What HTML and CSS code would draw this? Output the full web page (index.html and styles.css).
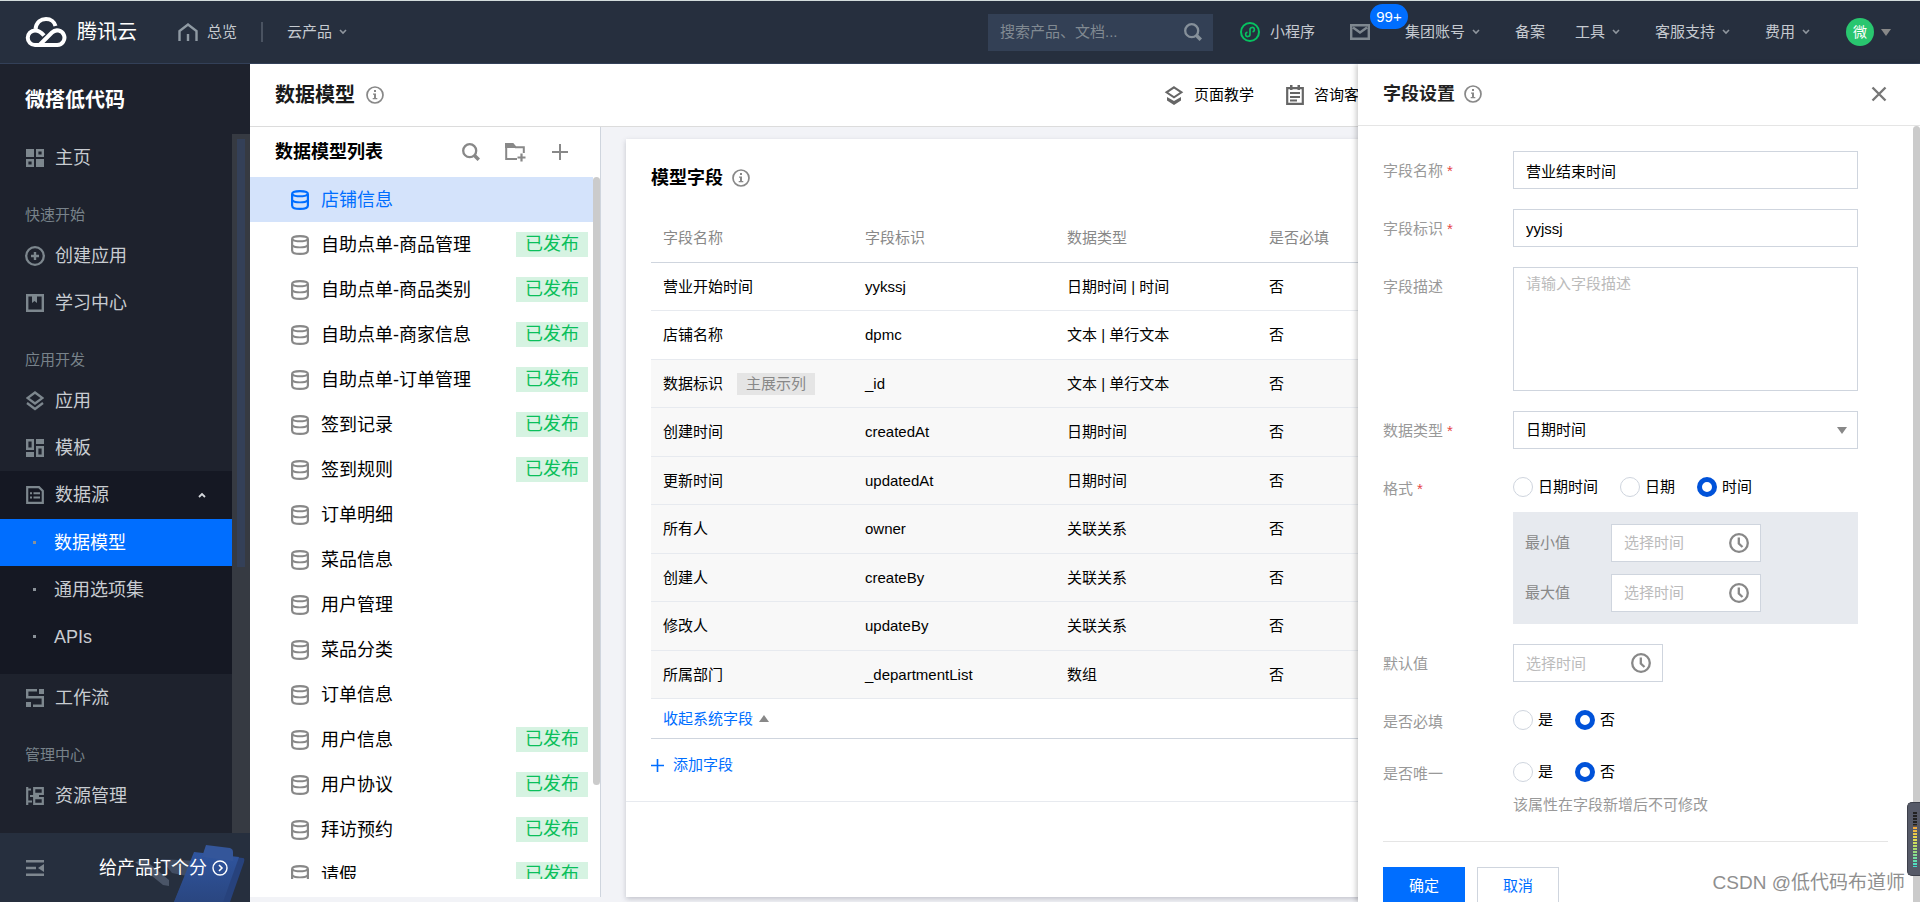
FILE: index.html
```html
<!DOCTYPE html>
<html lang="zh-CN">
<head>
<meta charset="utf-8">
<title>数据模型 - 微搭低代码</title>
<link rel="stylesheet" href="styles.css">
</head>
<body>
<svg class="sprite" aria-hidden="true">
  <symbol id="i-info" viewBox="0 0 18 18"><circle cx="9" cy="9" r="8" fill="none" stroke="currentColor" stroke-width="1.7"/><path d="M8 4h2v2H8zM7 7.500h3V12h1.300v1.200H6.700V12H8V8.700H7z" fill="currentColor"/></symbol>
  <symbol id="i-db" viewBox="0 0 18 20"><g fill="none" stroke="currentColor" stroke-width="2.200"><path d="M1.100 4C1.100 2 4 1.100 9 1.100S16.900 2 16.900 4v11.500c0 2.600-2.900 3.400-7.900 3.400s-7.900-.8-7.900-3.400z"/><path d="M1.500 4.500C3 6 5.500 6.300 9 6.300s6-.3 7.500-1.800M1.500 10.500C3 12 5.500 12.400 9 12.400s6-.4 7.500-1.900" stroke-width="1.900"/></g></symbol>
  <symbol id="i-search" viewBox="0 0 18 18"><circle cx="7.700" cy="7.700" r="6.500" fill="none" stroke="currentColor" stroke-width="2.300"/><path d="M12.500 12.500l4.300 4.300" stroke="currentColor" stroke-width="3.500"/></symbol>
  <symbol id="i-chev" viewBox="0 0 8 6"><path d="M1 1l3 3 3-3" fill="none" stroke="currentColor" stroke-width="1.600"/></symbol>
  <symbol id="i-clock" viewBox="0 0 20 20"><circle cx="10" cy="10" r="8.800" fill="none" stroke="currentColor" stroke-width="2.300"/><path d="M9.800 4.500v6l3.700 3.500" fill="none" stroke="currentColor" stroke-width="2.300"/></symbol>
  <symbol id="i-plus" viewBox="0 0 16 16"><path d="M8 0v16M0 8h16" stroke="currentColor" stroke-width="2"/></symbol>
  <symbol id="i-layers" viewBox="0 0 18 20"><path d="M9 1.500l7.500 5.500L9 12.500 1.500 7zM1 12l8 6 8-6" fill="none" stroke="currentColor" stroke-width="2.300"/></symbol>
</svg>

<header class="topbar">
  <a class="brand" href="#" aria-label="腾讯云">
    <svg width="42" height="30" viewBox="0 0 42 30"><g fill="none" stroke="#fff" stroke-width="4"><path d="M10.500 12C11.500 5 16 2 21 2c5 0 8.500 3 9.500 7"/><path d="M19 18.500C16.500 15.500 13.500 13.500 10 13.500a7.200 7.200 0 0 0 0 14.500H32a7.300 7.300 0 1 0-5-12.500L14.500 28"/></g></svg>
    <span>腾讯云</span>
  </a>
  <a class="top-home" href="#"><svg width="20" height="19" viewBox="0 0 20 19"><path d="M1.500 18V8L10 1.500 18.500 8v10M10 11v7" fill="none" stroke="#8f9aa3" stroke-width="2.400"/></svg>总览</a>
  <span class="top-sep"></span>
  <a class="top-link top-products" href="#">云产品<svg class="chev"><use href="#i-chev"/></svg></a>
  <div class="top-right">
    <label class="top-search"><input type="text" placeholder="搜索产品、文档..." aria-label="搜索"><svg width="18" height="18"><use href="#i-search"/></svg></label>
    <a class="top-link mini" href="#"><svg width="20" height="20" viewBox="0 0 20 20"><g fill="none" stroke="#07c160" stroke-width="2"><circle cx="10" cy="10" r="9"/><path d="M7.500 10.200a2.200 2.200 0 1 0 2.500 2.100V7.700a2.200 2.200 0 1 1 2.500 2.100" stroke-width="1.600"/></g></svg>小程序</a>
    <a class="mail" href="#" aria-label="消息"><svg width="20" height="16" viewBox="0 0 20 16"><path d="M1.200 1.200h17.600v13.600H1.200zM3 3.500l7 5 7-5" fill="none" stroke="#7e878f" stroke-width="2.400"/></svg><span class="badge">99+</span></a>
    <a class="top-link t-group" href="#">集团账号<svg class="chev"><use href="#i-chev"/></svg></a>
    <a class="top-link t-icp" href="#">备案</a>
    <a class="top-link t-tool" href="#">工具<svg class="chev"><use href="#i-chev"/></svg></a>
    <a class="top-link t-help" href="#">客服支持<svg class="chev"><use href="#i-chev"/></svg></a>
    <a class="top-link t-cost" href="#">费用<svg class="chev"><use href="#i-chev"/></svg></a>
    <button class="user" type="button"><span class="avatar">微</span><span class="tri-down"></span></button>
  </div>
</header>

<div class="body">
  <aside class="sidebar">
    <h1 class="side-title">微搭低代码</h1>
    <div class="side-scroll">
      <nav class="side-nav">
        <a class="nav-item" href="#"><svg width="18" height="18"><path d="M0 0h8v8H0zM10 10h8v8h-8z" fill="currentColor"/><path d="M11.200 1.200h5.600v5.600h-5.600zM1.200 11.200h5.600v5.600H1.200z" fill="none" stroke="currentColor" stroke-width="2.400"/></svg>主页</a>
        <div class="nav-label">快速开始</div>
        <a class="nav-item" href="#"><svg width="20" height="20" viewBox="0 0 20 20"><circle cx="10" cy="10" r="8.800" fill="none" stroke="currentColor" stroke-width="2.300"/><path d="M10 6v8M6 10h8" stroke="currentColor" stroke-width="2.400"/></svg>创建应用</a>
        <a class="nav-item" href="#"><svg width="18" height="18"><path d="M1.200 1.200h15.600v15.600H1.200z" fill="none" stroke="currentColor" stroke-width="2.400"/><path d="M6 2h5v7L8.500 7 6 9z" fill="currentColor"/></svg>学习中心</a>
        <div class="nav-label">应用开发</div>
        <a class="nav-item" href="#"><svg width="18" height="20"><use href="#i-layers"/></svg>应用</a>
        <a class="nav-item" href="#"><svg width="18" height="18"><path d="M10 0h8v5h-8zM0 13h8v5H0z" fill="currentColor"/><path d="M1.200 1.200h5.600v8.600H1.200zM11.200 8.200h5.600v8.600h-5.600z" fill="none" stroke="currentColor" stroke-width="2.400"/></svg>模板</a>
        <div class="nav-group">
          <a class="nav-item nav-parent" href="#"><svg width="18" height="18"><path d="M1.200 1.200H13l3.800 3.800v11.800H1.200z" fill="none" stroke="currentColor" stroke-width="2.200"/><path d="M4 6.200h2v2H4zM7.500 6.200H14v2H7.500zM4 10.500h2v2H4zM7.500 10.500H14v2H7.500z" fill="currentColor"/></svg>数据源<svg class="nav-arrow" width="8" height="6"><path d="M1 5l3-3 3 3" fill="none" stroke="#d5d8dc" stroke-width="1.800"/></svg></a>
          <a class="nav-sub active" href="#">数据模型</a>
          <a class="nav-sub" href="#">通用选项集</a>
          <a class="nav-sub" href="#">APIs</a>
        </div>
        <a class="nav-item" href="#"><svg width="18" height="18"><path d="M13 0h5v5h-5zM0 13h5v5H0z" fill="currentColor"/><path d="M11 1.200H1.200v7H16.800v8.600H7" fill="none" stroke="currentColor" stroke-width="2.400"/></svg>工作流</a>
        <div class="nav-label">管理中心</div>
        <a class="nav-item" href="#"><svg width="18" height="18"><path d="M1.200 0v18M1 2.500h4M1 14.500h5M8.200 1.200h8.600v5.600H8.200zM8.200 11.200h8.600v5.600H8.200zM4 9h9" fill="none" stroke="currentColor" stroke-width="2.200"/></svg>资源管理</a>
        <a class="nav-item" href="#" aria-label="更多"><svg width="20" height="20"><path d="M1 1h18v18H1z" fill="none" stroke="currentColor" stroke-width="2"/></svg></a>
      </nav>
      <div class="side-track"><div class="side-thumb"></div></div>
    </div>
    <div class="side-foot">
      <button class="fold" type="button" aria-label="收起菜单"><svg width="18" height="16" viewBox="0 0 18 16"><path d="M0 1.200h18M0 8h10M0 14.800h18" stroke="#7e878f" stroke-width="2.400"/><path d="M18 4v8l-6-4z" fill="#7e878f"/></svg></button>
      <a class="rate" href="#"><span>给产品打个分</span><svg width="16" height="16" viewBox="0 0 16 16"><circle cx="8" cy="8" r="7" fill="none" stroke="#fff" stroke-width="1.400"/><path d="M7 5l3 3-3 3" fill="none" stroke="#fff" stroke-width="1.600"/></svg></a>
      <svg class="rate-art" width="120" height="58" viewBox="0 0 120 58"><defs><linearGradient id="ga" x1="0" y1="0" x2="0" y2="1"><stop offset="0" stop-color="#2f559f"/><stop offset="1" stop-color="#2a4680"/></linearGradient></defs><path d="M10 18l10-2 24 20v6l-6-1z" fill="#4a5567"/><path d="M36 15l35 2-4 16-20-4z" fill="#414d63"/><path d="M70 9l48 5q2 0 1 4l-14 40H49z" fill="#27427c"/><path d="M69 8l45 5-16 45H49z" fill="url(#ga)"/><path d="M81 1l24 3q3 1 3 4v9l-31-4z" fill="#34569a"/></svg>
    </div>
  </aside>

  <main class="main">
    <div class="page-head">
      <h2>数据模型</h2><svg class="info" width="18" height="18"><use href="#i-info"/></svg>
      <div class="page-links">
        <a href="#"><svg width="20" height="19" viewBox="0 0 20 19"><path d="M10 1.300l7.500 5L10 11.300l-7.500-5z" fill="none" stroke="#666" stroke-width="2"/><path d="M3 11l7 4 7-4v3.500L10 19l-7-4.500z" fill="#666"/></svg>页面教学</a>
        <a href="#"><svg width="18" height="20" viewBox="0 0 18 20"><path d="M1.200 3.200h15.600v15.600H1.200zM4 8h10M4 12h10M4 15.500h7" fill="none" stroke="#666" stroke-width="2.200"/><path d="M4 0h2.500v5H4zM11.500 0H14v5h-2.500z" fill="#666"/></svg>咨询客服</a>
      </div>
    </div>
    <div class="content">
      <section class="models">
        <div class="models-head">
          <h3>数据模型列表</h3>
          <button type="button" aria-label="搜索"><svg width="18" height="18"><use href="#i-search"/></svg></button>
          <button type="button" aria-label="新建分组"><svg width="22" height="19" viewBox="0 0 22 19"><path d="M12 16H1.200V1.200H8l2.500 3h8.300V10" fill="none" stroke="currentColor" stroke-width="2"/><path d="M0 0h8l3 5H0z" fill="currentColor"/><path d="M16.500 10.500v8M12.500 14.500h8" stroke="currentColor" stroke-width="2.200"/></svg></button>
          <button type="button" aria-label="新建"><svg width="16" height="16"><use href="#i-plus"/></svg></button>
        </div>
        <div class="models-scroll">
          <ul class="model-list">
            <li class="active"><svg><use href="#i-db"/></svg><a href="#">店铺信息</a></li>
            <li><svg><use href="#i-db"/></svg><a href="#">自助点单-商品管理</a><span class="tag">已发布</span></li>
            <li><svg><use href="#i-db"/></svg><a href="#">自助点单-商品类别</a><span class="tag">已发布</span></li>
            <li><svg><use href="#i-db"/></svg><a href="#">自助点单-商家信息</a><span class="tag">已发布</span></li>
            <li><svg><use href="#i-db"/></svg><a href="#">自助点单-订单管理</a><span class="tag">已发布</span></li>
            <li><svg><use href="#i-db"/></svg><a href="#">签到记录</a><span class="tag">已发布</span></li>
            <li><svg><use href="#i-db"/></svg><a href="#">签到规则</a><span class="tag">已发布</span></li>
            <li><svg><use href="#i-db"/></svg><a href="#">订单明细</a></li>
            <li><svg><use href="#i-db"/></svg><a href="#">菜品信息</a></li>
            <li><svg><use href="#i-db"/></svg><a href="#">用户管理</a></li>
            <li><svg><use href="#i-db"/></svg><a href="#">菜品分类</a></li>
            <li><svg><use href="#i-db"/></svg><a href="#">订单信息</a></li>
            <li><svg><use href="#i-db"/></svg><a href="#">用户信息</a><span class="tag">已发布</span></li>
            <li><svg><use href="#i-db"/></svg><a href="#">用户协议</a><span class="tag">已发布</span></li>
            <li><svg><use href="#i-db"/></svg><a href="#">拜访预约</a><span class="tag">已发布</span></li>
            <li><svg><use href="#i-db"/></svg><a href="#">请假</a><span class="tag">已发布</span></li>
          </ul>
          <div class="list-track"><div class="list-thumb"></div></div>
        </div>
      </section>

      <section class="card">
        <div class="fields">
          <div class="card-title"><h3>模型字段</h3><svg class="info" width="18" height="18"><use href="#i-info"/></svg></div>
          <table>
            <thead><tr><th>字段名称</th><th>字段标识</th><th>数据类型</th><th>是否必填</th><th class="rest"></th></tr></thead>
            <tbody>
              <tr><td>营业开始时间</td><td>yykssj</td><td>日期时间 | 时间</td><td>否</td><td></td></tr>
              <tr><td>店铺名称</td><td>dpmc</td><td>文本 | 单行文本</td><td>否</td><td></td></tr>
              <tr class="sys"><td>数据标识<span class="main-col">主展示列</span></td><td>_id</td><td>文本 | 单行文本</td><td>否</td><td></td></tr>
              <tr class="sys"><td>创建时间</td><td>createdAt</td><td>日期时间</td><td>否</td><td></td></tr>
              <tr class="sys"><td>更新时间</td><td>updatedAt</td><td>日期时间</td><td>否</td><td></td></tr>
              <tr class="sys"><td>所有人</td><td>owner</td><td>关联关系</td><td>否</td><td></td></tr>
              <tr class="sys"><td>创建人</td><td>createBy</td><td>关联关系</td><td>否</td><td></td></tr>
              <tr class="sys"><td>修改人</td><td>updateBy</td><td>关联关系</td><td>否</td><td></td></tr>
              <tr class="sys"><td>所属部门</td><td>_departmentList</td><td>数组</td><td>否</td><td></td></tr>
            </tbody>
          </table>
          <div class="collapse"><a href="#">收起系统字段</a><span class="tri-up"></span></div>
          <a class="add" href="#"><svg width="13" height="13"><use href="#i-plus"/></svg>添加字段</a>
        </div>
      </section>
    </div>
  </main>
</div>

<aside class="drawer">
  <div class="drawer-head">
    <h3>字段设置</h3><svg class="info" width="18" height="18"><use href="#i-info"/></svg>
    <button class="close" type="button" aria-label="关闭"><svg width="16" height="16" viewBox="0 0 16 16"><path d="M1.500 1.500l13 13M14.500 1.500l-13 13" stroke="#777" stroke-width="2.400"/></svg></button>
  </div>
  <div class="drawer-scroll">
    <form class="form">
      <div class="row"><label class="lab req" for="f-name">字段名称</label><input class="box" id="f-name" type="text" value="营业结束时间"></div>
      <div class="row"><label class="lab req" for="f-id">字段标识</label><input class="box" id="f-id" type="text" value="yyjssj"></div>
      <div class="row"><label class="lab" for="f-desc">字段描述</label><textarea class="box area" id="f-desc" placeholder="请输入字段描述"></textarea></div>
      <div class="row"><label class="lab req" for="f-type">数据类型</label><div class="select"><select class="box" id="f-type"><option>日期时间</option></select><span class="tri-down"></span></div></div>
      <div class="row"><span class="lab req" id="l-fmt">格式</span>
        <div>
          <div class="radios" role="radiogroup" aria-labelledby="l-fmt"><label><input type="radio" name="fmt">日期时间</label><label><input type="radio" name="fmt">日期</label><label><input type="radio" name="fmt" checked>时间</label></div>
          <div class="range">
            <label for="f-min">最小值</label><div class="time"><input class="box" id="f-min" type="text" placeholder="选择时间"><svg><use href="#i-clock"/></svg></div>
            <label for="f-max">最大值</label><div class="time"><input class="box" id="f-max" type="text" placeholder="选择时间"><svg><use href="#i-clock"/></svg></div>
          </div>
        </div>
      </div>
      <div class="row"><label class="lab" for="f-def">默认值</label><div class="time"><input class="box" id="f-def" type="text" placeholder="选择时间"><svg><use href="#i-clock"/></svg></div></div>
      <div class="row"><span class="lab" id="l-must">是否必填</span><div class="radios" role="radiogroup" aria-labelledby="l-must"><label><input type="radio" name="must">是</label><label><input type="radio" name="must" checked>否</label></div></div>
      <div class="row"><span class="lab" id="l-uniq">是否唯一</span><div><div class="radios" role="radiogroup" aria-labelledby="l-uniq"><label><input type="radio" name="uniq">是</label><label><input type="radio" name="uniq" checked>否</label></div><p class="hint">该属性在字段新增后不可修改</p></div></div>
      <div class="actions"><button class="ok" type="button">确定</button><button class="cancel" type="button">取消</button></div>
    </form>
    <div class="drawer-thumb"></div>
  </div>
</aside>
<div class="meter"><div class="meter-bars"></div></div>
<div class="watermark">CSDN @低代码布道师</div>
</body>
</html>
```
FILE: styles.css
```css
* { box-sizing: border-box; }
body {
  margin: 0;
  height: 100vh;
  overflow: hidden;
  display: flex;
  flex-direction: column;
  background: #f2f3f7;
  color: #000;
  font: 15px/22px "Liberation Sans", "Noto Sans CJK SC", sans-serif;
}
a { color: inherit; text-decoration: none; }
button { border: 0; padding: 0; background: none; font: inherit; color: inherit; display: flex; align-items: center; }
input, select, textarea { font: inherit; color: inherit; }
h1, h2, h3, p, ul { margin: 0; padding: 0; }
svg { display: block; flex: none; }
.sprite { position: absolute; width: 0; height: 0; }
.info { color: #888; }

/* Top bar */
.topbar {
  flex: none;
  height: 64px;
  display: flex;
  align-items: center;
  padding-left: 25px;
  background: #262f3e;
  border-top: 1px solid #d3dcdc;
  border-bottom: 1px solid #334058;
  color: #c5cad0;
}
.brand { display: flex; align-items: center; gap: 10px; width: 153px; color: #fff; font-size: 20px; line-height: 30px; }
.top-home { display: flex; align-items: center; gap: 9px; width: 83px; }
.top-sep { width: 2px; height: 20px; background: #4a5361; }
.top-link { display: flex; align-items: center; }
.top-products { margin-left: 24px; }
.chev { width: 8px; height: 6px; margin-left: 7px; color: #8f969e; }
.top-right { margin-left: auto; display: flex; align-items: center; padding-right: 29px; }
.top-search { display: flex; align-items: center; width: 225px; height: 37px; padding: 0 11px 0 12px; background: #334055; color: #86909a; }
.top-search input { flex: 1; min-width: 0; border: 0; padding: 0; background: none; outline: 0; }
.top-search input::placeholder { color: #818a92; }
.mini { gap: 10px; margin-left: 27px; width: 110px; }
.mail { position: relative; width: 20px; }
.badge {
  position: absolute;
  left: 20px;
  top: -20px;
  width: 38px;
  height: 25px;
  border-radius: 13px;
  background: #006eff;
  color: #fff;
  text-align: center;
  line-height: 25px;
}
.t-group { margin-left: 35px; width: 110px; }
.t-icp { width: 60px; }
.t-tool { width: 80px; }
.t-help { width: 110px; }
.t-cost { width: 81px; }
.user { gap: 7px; }
.avatar { width: 28px; height: 28px; border-radius: 50%; background: #29c66f; color: #fff; font-size: 14px; line-height: 28px; text-align: center; }
.tri-down { border: 5px solid transparent; border-top: 7px solid #888; border-bottom: 0; }
.tri-up { border: 5px solid transparent; border-bottom: 7px solid #888; border-top: 0; }

.body { flex: 1; min-height: 0; display: flex; }

/* Sidebar */
.sidebar { flex: none; width: 250px; display: flex; flex-direction: column; background: #1e222d; color: #c8ccd1; }
.side-title { height: 70px; padding-left: 25px; font-size: 20px; line-height: 72px; color: #fff; }
.side-scroll { flex: 1; min-height: 0; display: flex; overflow: hidden; }
.side-nav { flex: 1; font-size: 18px; }
.nav-item { display: flex; align-items: center; height: 47px; padding-left: 26px; }
.nav-item > svg:first-child { color: #7d878e; margin-right: 11px; }
.nav-item > svg[width="20"] { margin-left: -1px; margin-right: 10px; }
.nav-label { padding: 16px 0 0 25px; height: 51px; font-size: 15px; line-height: 35px; color: #78828a; }
.nav-group { padding-bottom: 14px; background: #151823; }
.nav-parent { height: 48px; }
.nav-arrow { margin: 0 26px 0 auto; }
.nav-sub { display: flex; align-items: center; height: 47px; padding-left: 33px; }
.nav-sub::before { content: ""; width: 3px; height: 3px; margin-right: 18px; background: #8a9198; }
.nav-sub.active { background: #006eff; color: #fff; }
.side-track { width: 18px; padding: 5px; background: #363a42; }
.side-thumb { width: 8px; height: 428px; background: #344058; }
.side-foot { position: relative; height: 69px; display: flex; align-items: center; padding: 0 22px 0 26px; background: #262f3e; }
.fold { z-index: 1; }
.rate { z-index: 1; margin-left: auto; display: flex; align-items: center; gap: 5px; color: #fff; font-size: 18px; }
.rate-art { position: absolute; right: 5px; bottom: 0; }

/* Page */
.main { flex: 1; min-width: 0; display: flex; flex-direction: column; }
.page-head { flex: none; height: 63px; display: flex; align-items: center; padding: 0 25px; background: #fff; border-bottom: 1px solid #dcdcdc; }
.page-head h2 { font-size: 20px; line-height: 30px; color: #1a1a1a; margin-right: 11px; }
.page-links { margin-left: 780px; display: flex; gap: 32px; }
.page-links a { display: flex; align-items: center; gap: 10px; white-space: nowrap; }
.content { flex: 1; min-height: 0; display: flex; padding: 0 25px 5px 0; }

/* Model list */
.models { flex: none; width: 351px; display: flex; flex-direction: column; padding-bottom: 18px; background: #fff; border-right: 1px solid #cfd5de; }
.models-head { flex: none; height: 50px; display: flex; align-items: center; gap: 25px; padding: 0 32px 0 25px; color: #888; }
.models-head h3 { flex: 1; font-size: 18px; color: #000; }
.models-scroll { flex: 1; min-height: 0; display: flex; overflow: hidden; }
.model-list { flex: 1; list-style: none; font-size: 18px; }
.model-list li { display: flex; align-items: center; height: 45px; padding: 0 5px 0 41px; }
.model-list svg { width: 18px; height: 20px; margin-right: 12px; color: #888; }
.model-list .active { background: #d4e3fb; color: #006eff; }
.model-list .active svg { color: #006eff; }
.tag { margin-left: auto; width: 72px; height: 25px; background: #d6f3e2; color: #0abf5b; line-height: 24px; text-align: center; }
.list-track { width: 7px; }
.list-thumb { height: 608px; border-radius: 4px; background: #cbcbcb; }

/* Field table */
.card { flex: 1; min-width: 0; margin: 12px 0 0 25px; background: #fff; box-shadow: 0 2px 5px rgba(54, 58, 80, .25); }
.fields { padding: 24px 25px 25px; border-bottom: 1px solid #e7eaef; }
.card-title { display: flex; align-items: center; gap: 9px; height: 30px; }
.card-title h3 { font-size: 18px; }
table { width: 100%; margin-top: 21px; border-spacing: 0; table-layout: fixed; }
th, td { width: 202px; padding: 0 12px; text-align: left; white-space: nowrap; }
.rest { width: auto; }
th { height: 49px; border-bottom: 1px solid #cfd5de; font-weight: 400; color: #888; }
td { height: 48px; border-bottom: 1px solid #e7eaef; }
tr:nth-child(even) td { height: 49px; }
.sys td { background: #f8f8f8; }
.main-col { display: inline-block; margin-left: 14px; padding: 0 9px; background: #e5e5e5; color: #888; }
.collapse { display: flex; align-items: center; gap: 6px; height: 40px; padding-left: 12px; color: #006eff; border-bottom: 1px solid #cfd5de; }
.add { display: flex; align-items: center; gap: 9px; height: 22px; margin-top: 15px; color: #006eff; }

/* Drawer over the page */
.drawer {
  position: absolute;
  top: 64px;
  right: 0;
  bottom: 0;
  width: 562px;
  display: flex;
  flex-direction: column;
  background: #fff;
  box-shadow: -2px 0 5px rgba(0, 0, 0, .2);
}
.drawer-head { flex: none; height: 62px; display: flex; align-items: center; padding: 0 33px 2px 25px; border-bottom: 1px solid #e5e5e5; }
.drawer-head h3 { font-size: 18px; color: #222; margin-right: 9px; }
.close { margin-left: auto; }
.drawer-scroll { flex: 1; min-height: 0; display: flex; overflow: hidden; }
.drawer-thumb { width: 7px; border-radius: 4px 4px 0 0; background: #cbcbcb; }
.form { flex: 1; display: flex; flex-direction: column; gap: 20px; padding: 25px 25px 0; }
.row { display: grid; grid-template-columns: 130px 345px; align-items: start; }
.lab { height: 32px; line-height: 40px; color: #999; }
.req::after { content: "*"; margin-left: 4px; color: #e54545; }
.box { display: block; width: 100%; height: 38px; margin: 0; padding: 0 12px; border: 1px solid #cfd5de; border-radius: 0; background: #fff; outline: 0; }
.box::placeholder { color: #bbb; }
.area { height: 124px; padding: 5px 12px; resize: none; }
.select, .time { position: relative; }
.select select { appearance: none; }
.select .tri-down { position: absolute; right: 11px; top: 16px; }
.time { width: 150px; }
.time svg { position: absolute; right: 12px; top: 9px; width: 20px; height: 20px; color: #888; }
.radios { display: flex; gap: 22px; height: 32px; padding-top: 4px; }
.radios label { display: flex; align-items: center; gap: 5px; }
.radios input { appearance: none; width: 20px; height: 20px; margin: 0; border: 1px solid #cfd5de; border-radius: 50%; background: #fff; }
.radios input:checked { border: 5px solid #0052d9; }
.range { display: grid; grid-template-columns: 86px 150px; gap: 12px 0; margin-top: 11px; padding: 12px; background: #e7eaef; line-height: 38px; color: #888; }
.hint { margin-top: 8px; color: #999; }
.actions { display: flex; gap: 12px; margin-top: 5px; padding-top: 25px; border-top: 1px solid #e5e5e5; }
.actions button { width: 82px; height: 38px; justify-content: center; flex: none; }
.ok { background: #006eff; color: #fff; }
.actions .cancel { border: 1px solid #cfd5de; color: #006eff; }

/* Floating overlays */
.meter { position: absolute; right: 0; bottom: 26px; width: 13px; height: 74px; padding: 9px 3px 8px 5px; border: 1px solid #3c3f4a; border-right: 0; border-radius: 5px 0 0 5px; background: #565a68; }
.meter-bars { height: 100%; background: repeating-linear-gradient(transparent 0 2px, #565a68 2px 3px), linear-gradient(#222 0 24%, #f5a53a 26%, #e8dc50 48%, #a6dc70 68%, #3fe0d0); }
.watermark { position: absolute; right: 15px; bottom: 4px; font-size: 19px; line-height: 30px; color: #8f8f8f; text-shadow: 1px 1px 0 #fff; }
```
